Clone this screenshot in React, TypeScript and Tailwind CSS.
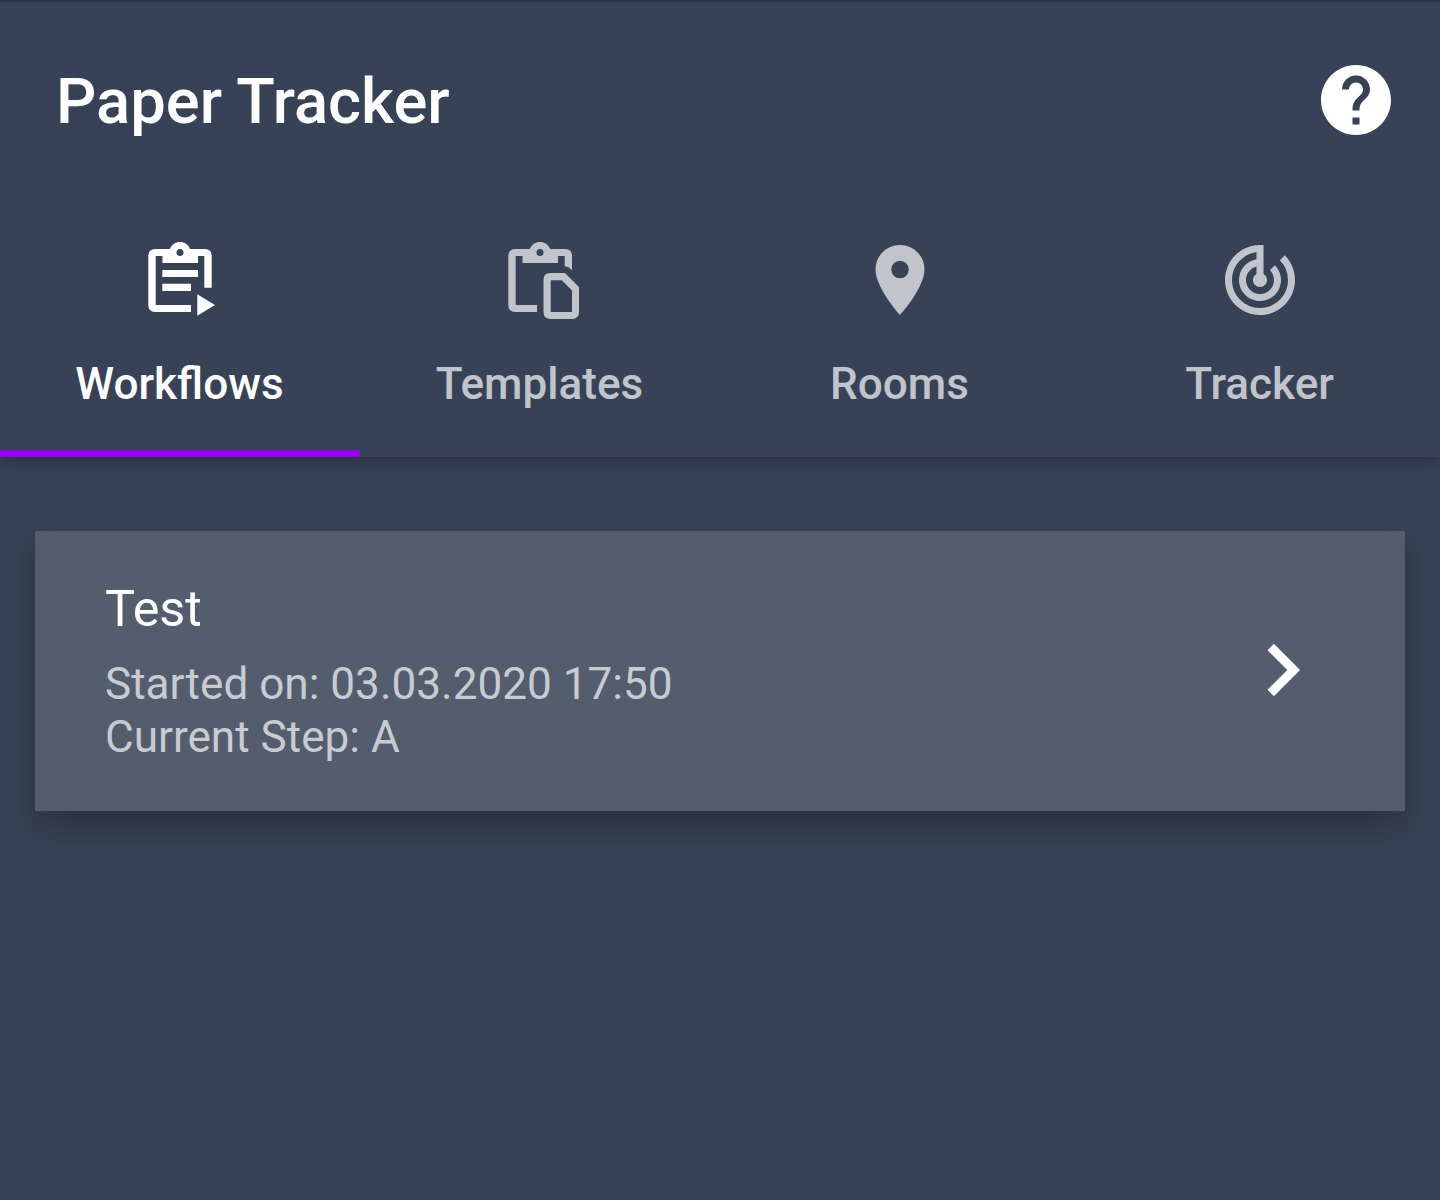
import React from 'react';
import { MdHelp, MdLocationOn, MdTrackChanges } from 'react-icons/md';

function ClipTop() {
  return (
    <path fillRule="evenodd" d="M32.5 33V19H40C43 9.700 57 9.700 60 19H68V33ZM50 19A3.500 3.500 0 0 0 50 26A3.500 3.500 0 0 0 50 19Z" fill="currentColor" />
  );
}

function WorkflowIcon() {
  return (
    <svg viewBox="0 0 100 100" className="h-[100px] w-[100px]" fill="currentColor">
      <path fillRule="evenodd" d="M61 82H25.300Q18.300 82 18.300 75V26Q18.300 19 25.300 19H40V26H25.700V75H61ZM60 19H74.700Q81.700 19 81.700 26V57.700H74.300V26H60Z" />
      <ClipTop />
      <path d="M32.300 40H68V47H32.300ZM32.300 53.700H61V61H32.300ZM67.300 64.300L85 75L67.300 85.700Z" />
    </svg>
  );
}

function TemplateIcon() {
  return (
    <svg viewBox="0 0 100 100" className="h-[100px] w-[100px]" fill="currentColor">
      <path d="M47 82H25.300Q18.300 82 18.300 75V26Q18.300 19 25.300 19H40V26H25.700V75H47ZM60 19H75Q82 19 82 26V40.500L79 37.500Q77.500 36.500 74.700 36.500V26H60Z" />
      <ClipTop />
      <path fillRule="evenodd" d="M60 43H75L89 57V82Q89 89 82 89H60.500Q53.500 89 53.500 82V50Q53.500 43 60 43ZM60.700 50.300V82H82V60.500L71.800 50.300Z" />
    </svg>
  );
}

function Tab({ label, active = false, children }: { label: string; active?: boolean; children: React.ReactNode }) {
  return (
    <div className={active ? 'flex flex-1 flex-col items-center border-b-[7px] border-[#9500f0] text-white' : 'flex flex-1 flex-col items-center border-b-[7px] border-transparent text-[#c1c4cb]'}>
      <div className="flex h-[100px] items-center">{children}</div>
      <div className="mt-6 pr-px text-[44.1px] font-medium leading-[60px]">{label}</div>
    </div>
  );
}

export default function App() {
  return (
    <div className="flex h-[1200px] w-full flex-col overflow-hidden border-t-2 border-[#2b3444] bg-[#384256] font-['Roboto',sans-serif] text-white">
      <header className="h-[455px] shrink-0 shadow-[0_7px_16px_-2px_rgba(0,0,0,0.28)]">
        <div className="flex h-[196px] items-center justify-between pl-[56px] pr-[42px]">
          <h1 className="pt-[2px] text-[63.3px] font-medium">Paper Tracker</h1>
          <MdHelp className="size-[84px]" />
        </div>
        <nav className="flex h-[259px] pt-[32px]">
          <Tab label="Workflows" active><WorkflowIcon /></Tab>
          <Tab label="Templates"><TemplateIcon /></Tab>
          <Tab label="Rooms"><MdLocationOn className="size-[84px]" /></Tab>
          <Tab label="Tracker"><MdTrackChanges className="size-[84px]" /></Tab>
        </nav>
      </header>
      <main className="px-[35px] pt-[74px]">
        <article className="flex h-[280px] items-center justify-between bg-[#545d6d] pl-[70px] pr-[104px] shadow-[0_-1px_0_-5px_#454f61,0_14px_34px_rgba(0,0,0,0.28)]">
          <div>
            <h2 className="text-[50.4px] leading-[62px]">Test</h2>
            <p className="mt-[18px] text-[44.1px] leading-[53px] text-[#c8cbd0]">Started on: 03.03.2020 17:50<br />Current Step: A</p>
          </div>
          <svg viewBox="0 0 34 54" className="mb-[2px] h-[54px] w-[34px]"><path d="M3.700 4L26.700 27L3.700 50" fill="none" stroke="white" strokeWidth="9" /></svg>
        </article>
      </main>
    </div>
  );
}
